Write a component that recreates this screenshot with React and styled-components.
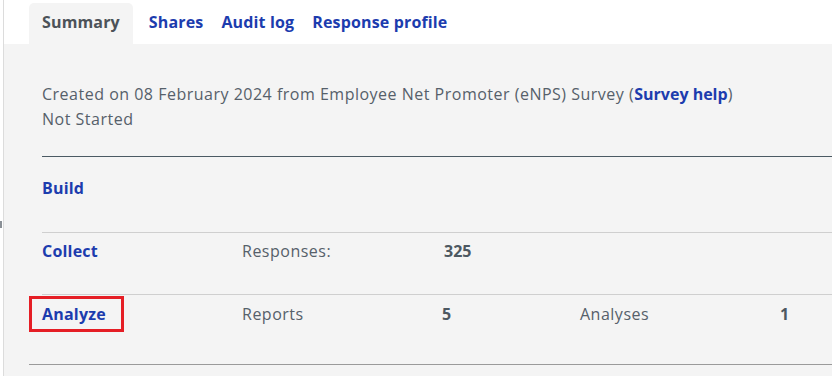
import React from "react";
import styled, { createGlobalStyle } from "styled-components";

const Global = createGlobalStyle`
  html, body { margin: 0; padding: 0; background: #ffffff; }
  body { font-family: "Open Sans", Lato, sans-serif; font-size: 16px; }
  * { box-sizing: border-box; }
`;

const Frame = styled.div`
  display: flex;
  width: 832px;
  height: 376px;
  overflow: hidden;
  position: relative;
`;

const Gutter = styled.div`
  width: 4px;
  flex: none;
  border-right: 1px solid #dcdcdc;
  background: #ffffff;
  position: relative;
  &::after {
    content: "";
    position: absolute;
    left: 0;
    top: 221px;
    width: 2px;
    height: 7px;
    background: #8a9096;
  }
`;

const Main = styled.div`
  flex: 1;
  display: flex;
  flex-direction: column;
  min-width: 0;
`;

const TabBar = styled.nav`
  display: flex;
  align-items: flex-end;
  height: 44px;
  padding-left: 25px;
  background: #ffffff;
`;

const Tab = styled.a`
  display: flex;
  align-items: center;
  height: 41px;
  padding: 0 ${(p) => (p.$active ? "13px" : "0")};
  margin-right: ${(p) => (p.$active ? "16px" : "18px")};
  border-radius: 5px 5px 0 0;
  background: ${(p) => (p.$active ? "#f4f4f4" : "transparent")};
  color: ${(p) => (p.$active ? "#4c5258" : "#1c3cae")};
  font-weight: 700;
  font-size: 16px;
  letter-spacing: 0.15px;
  padding-bottom: 4px;
  text-decoration: none;
`;

const Panel = styled.section`
  flex: 1;
  background: #f4f4f4;
  padding: 38px 0 0 25px;
`;

const Info = styled.div`
  margin-left: 13px;
  color: #56606a;
  line-height: 25px;
  letter-spacing: 0.5px;
  padding-bottom: 24px;
  border-bottom: 1px solid #4b5a63;
`;

const InfoLink = styled.a`
  color: #1c3cae;
  font-weight: 700;
  letter-spacing: 0;
  text-decoration: none;
`;

const Table = styled.div`
  border-bottom: 1px solid #9a9a9a;
`;

const Row = styled.div`
  display: grid;
  grid-template-columns: 200px 200px 138px 200px 1fr;
  align-items: start;
  margin-left: 13px;
  line-height: 24px;
  padding-top: ${(p) => p.$top}px;
  height: ${(p) => p.$h}px;
  border-top: ${(p) => (p.$line ? "1px solid #cfcfcf" : "none")};
`;

const StageLink = styled.a`
  color: #1c3cae;
  font-weight: 700;
  letter-spacing: 0.2px;
  text-decoration: none;
  justify-self: start;
  position: relative;
  ${(p) =>
    p.$marked &&
    `
    &::after {
      content: "";
      position: absolute;
      left: -13px;
      right: -18px;
      top: -6px;
      bottom: -6px;
      border: 3px solid #e51e25;
    }
  `}
`;

const Label = styled.span`
  color: #56606a;
  letter-spacing: 0.5px;
`;

const Value = styled.span`
  color: #4d5861;
  font-weight: 700;
  padding-left: ${(p) => p.$nudge || 0}px;
`;

export default function App() {
  return (
    <>
      <Global />
      <Frame>
        <Gutter />
        <Main>
          <TabBar>
            <Tab $active>Summary</Tab>
            <Tab>Shares</Tab>
            <Tab>Audit log</Tab>
            <Tab>Response profile</Tab>
          </TabBar>
          <Panel>
            <Info>
              Created on 08 February 2024 from Employee Net Promoter (eNPS)
              Survey (<InfoLink>Survey help</InfoLink>)
              <br />
              Not Started
            </Info>
            <Table>
              <Row $top={19} $h={75}>
                <StageLink>Build</StageLink>
              </Row>
              <Row $line $top={6} $h={62}>
                <StageLink>Collect</StageLink>
                <Label>Responses:</Label>
                <Value $nudge={2}>325</Value>
              </Row>
              <Row $line $top={7} $h={70}>
                <StageLink $marked>Analyze</StageLink>
                <Label>Reports</Label>
                <Value>5</Value>
                <Label>Analyses</Label>
                <Value>1</Value>
              </Row>
            </Table>
          </Panel>
        </Main>
      </Frame>
    </>
  );
}
